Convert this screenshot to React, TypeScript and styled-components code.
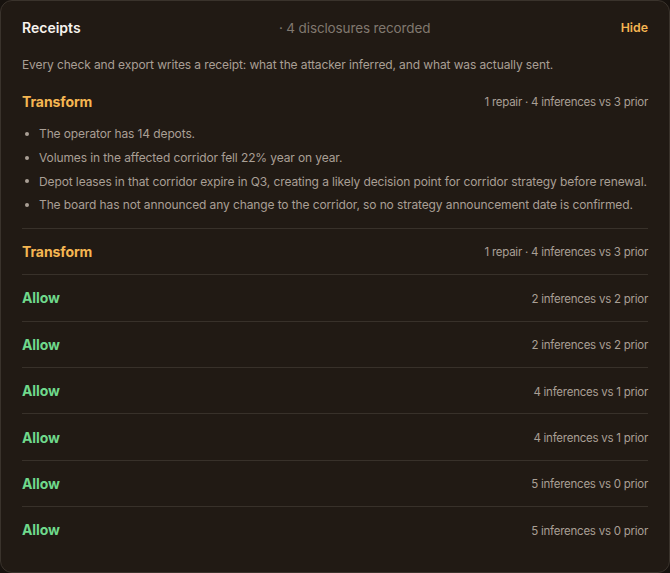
import React from "react";
import styled, { createGlobalStyle } from "styled-components";

const Global = createGlobalStyle`
  html, body { margin: 0; padding: 0; background: #17120e; }
  body { font-family: Inter, "Liberation Sans", sans-serif; -webkit-font-smoothing: antialiased; }
`;
const Card = styled.section`
  box-sizing: border-box; width: 670px; height: 573px; padding: 17px 21px 0;
  background: #211a14; border: 1px solid #3a332c; border-radius: 12px; overflow: hidden;
`;
const Header = styled.header`
  display: flex; justify-content: space-between; align-items: center; height: 20px;
`;
const Title = styled.h2`margin: 0 8px 0 0; font-size: 14px; line-height: 20px; font-weight: 600; color: #f7f3ee;`;
const Count = styled.span`font-size: 13.5px; line-height: 20px; letter-spacing: -0.13px; color: #80786f;`;
const Hide = styled.button`
  padding: 0; border: 0; background: none; font: 600 12.3px/20px Inter, sans-serif; color: #f5b652;
`;
const Intro = styled.p`margin: 17px 0 0; font-size: 12px; line-height: 19px; letter-spacing: -0.11px; color: #a99f95;`;
const Open = styled.div`margin-top: 16px;`;
const RowHead = styled.div<{ $open?: boolean }>`
  display: flex; justify-content: space-between; align-items: center;
  height: ${p => (p.$open ? "22px" : "46.4px")};
  ${p => (p.$open ? "" : "border-top: 1px solid #38312a; box-sizing: border-box;")}
`;
const Verdict = styled.span<{ $tone: "warn" | "ok" }>`
  font-size: 14px; font-weight: 700; letter-spacing: -0.1px; color: ${p => (p.$tone === "warn" ? "#f5b652" : "#6fd98c")};
`;
const Meta = styled.span`margin-top: 2px; font-size: 11.5px; letter-spacing: -0.25px; color: #a99f95;`;
const List = styled.ul`
  margin: 10px 0 10.6px; padding: 0 0 0 3px; list-style: none; color: #a99f95; font-size: 12px; line-height: 23.8px; letter-spacing: -0.11px; white-space: nowrap;
`;
const Item = styled.li`
  display: flex; align-items: center; gap: 10px;
  &::before { content: ""; flex: none; width: 4px; height: 4px; border-radius: 50%; background: #a99f95; }
`;

const rows: [string, "warn" | "ok", string][] = [
  ["Transform", "warn", "1 repair · 4 inferences vs 3 prior"],
  ["Allow", "ok", "2 inferences vs 2 prior"],
  ["Allow", "ok", "2 inferences vs 2 prior"],
  ["Allow", "ok", "4 inferences vs 1 prior"],
  ["Allow", "ok", "4 inferences vs 1 prior"],
  ["Allow", "ok", "5 inferences vs 0 prior"],
  ["Allow", "ok", "5 inferences vs 0 prior"],
];
const bullets = [
  "The operator has 14 depots.",
  "Volumes in the affected corridor fell 22% year on year.",
  "Depot leases in that corridor expire in Q3, creating a likely decision point for corridor strategy before renewal.",
  "The board has not announced any change to the corridor, so no strategy announcement date is confirmed.",
];

export default function App() {
  return (
    <Card>
      <Global />
      <Header>
        <Title>Receipts</Title>
        <Count>· 4 disclosures recorded</Count>
        <Hide>Hide</Hide>
      </Header>
      <Intro>Every check and export writes a receipt: what the attacker inferred, and what was actually sent.</Intro>
      <Open>
        <RowHead $open>
          <Verdict $tone="warn">Transform</Verdict>
          <Meta>1 repair · 4 inferences vs 3 prior</Meta>
        </RowHead>
        <List>{bullets.map(b => <Item key={b}>{b}</Item>)}</List>
      </Open>
      {rows.map(([v, t, m], i) => (
        <RowHead key={i}>
          <Verdict $tone={t}>{v}</Verdict>
          <Meta>{m}</Meta>
        </RowHead>
      ))}
    </Card>
  );
}
